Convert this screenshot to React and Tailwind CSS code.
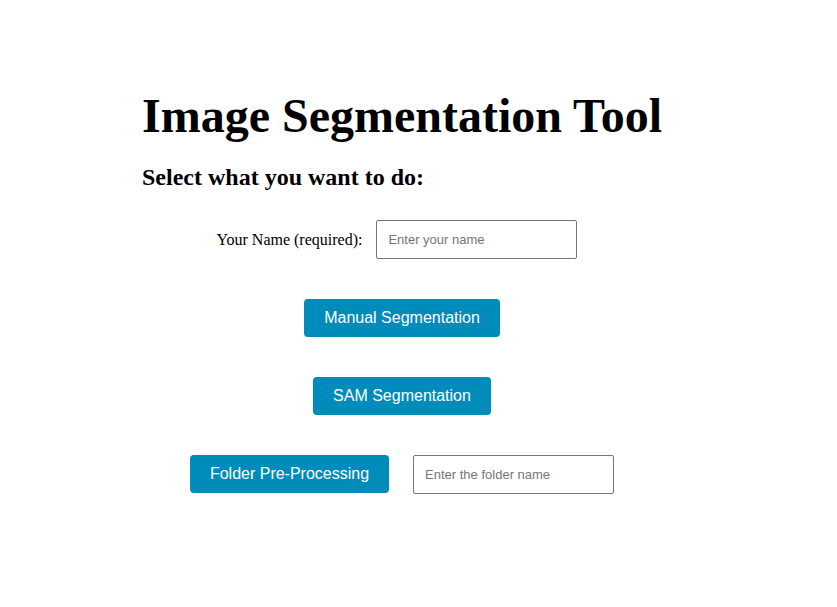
import React, { useState } from 'react';

const serif = { fontFamily: '"Liberation Serif", "Times New Roman", serif' };

const ActionButton = ({ children, onClick }) => (
  <button
    onClick={onClick}
    className="bg-[#008cba] text-white text-[16px] leading-[18px] px-[20px] py-[10px] rounded-[4px] font-['Liberation_Sans',Arial,sans-serif]"
  >
    {children}
  </button>
);

const TextInput = ({ value, onChange, placeholder }) => (
  <input
    type="text"
    value={value}
    onChange={(e) => onChange(e.target.value)}
    placeholder={placeholder}
    className="w-[201px] h-[39px] px-[11px] border border-[#767676] rounded-[2px] text-[13px] text-black placeholder:text-[#757575] outline-none font-['Liberation_Sans',Arial,sans-serif]"
  />
);

const App = () => {
  const [name, setName] = useState('');
  const [folder, setFolder] = useState('');

  return (
    <div className="min-h-[607px] bg-white text-black" style={serif}>
      <div className="ml-[142px] w-[520px] pt-[88px] flex flex-col">
        <h1 className="text-[48px] leading-[55px] font-bold whitespace-nowrap">Image Segmentation Tool</h1>
        <h2 className="mt-[20px] text-[24px] leading-[28px] font-bold">Select what you want to do:</h2>

        <div className="flex flex-col items-center">
          <div className="mt-[29px] flex items-center gap-[14px] pr-[10px]">
            <label className="text-[16px]">Your Name (required):</label>
            <TextInput value={name} onChange={setName} placeholder="Enter your name" />
          </div>

          <div className="mt-[40px]">
            <ActionButton>Manual Segmentation</ActionButton>
          </div>

          <div className="mt-[40px]">
            <ActionButton>SAM Segmentation</ActionButton>
          </div>

          <div className="mt-[40px] flex items-start gap-[24px]">
            <ActionButton>Folder Pre-Processing</ActionButton>
            <TextInput value={folder} onChange={setFolder} placeholder="Enter the folder name" />
          </div>
        </div>
      </div>
    </div>
  );
};

export default App;
